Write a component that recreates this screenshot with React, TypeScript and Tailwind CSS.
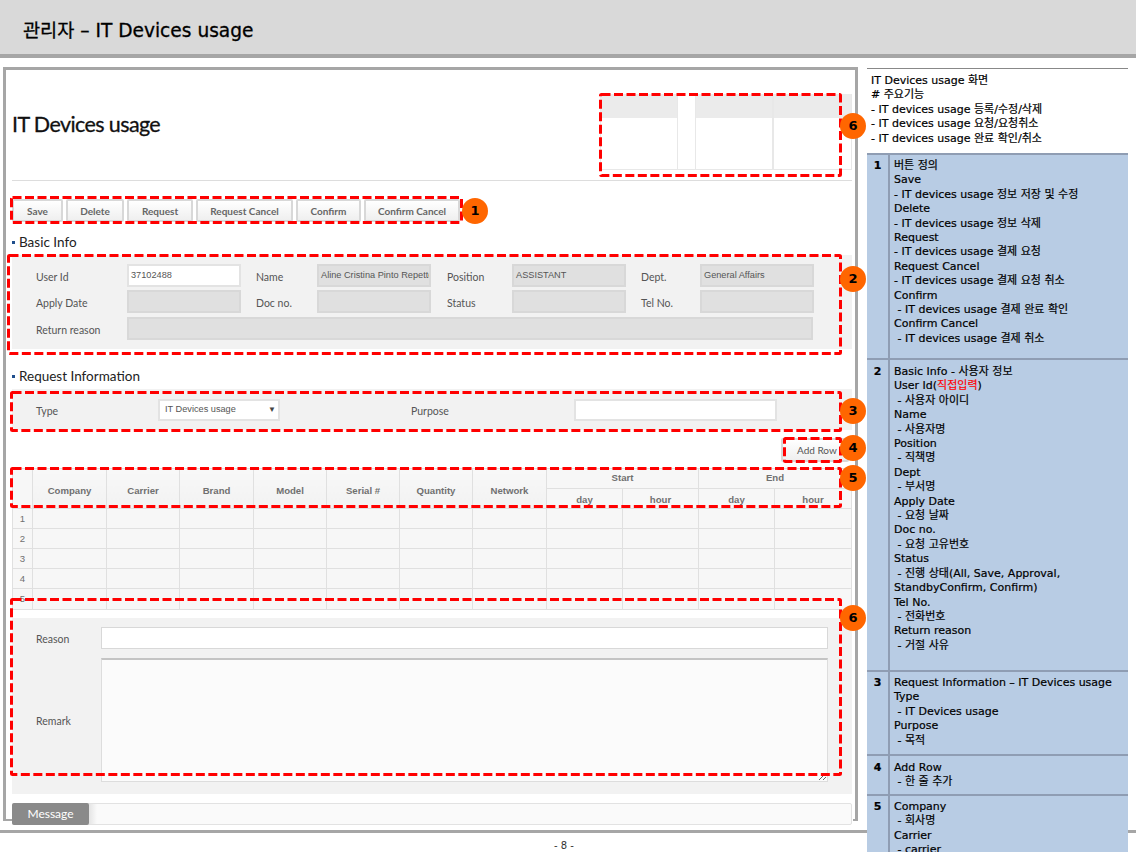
import React from "react";

const LABEL = "pt-[4px] text-[10.5px] text-[#555] font-['Lato',sans-serif]";
const ARIAL = "font-['Liberation_Sans',sans-serif]";
const PANEL_FONT = "font-['DejaVu_Sans','Noto_Sans_CJK_KR',sans-serif]";
const CELL = "border border-[#e0e0e0]";

const buttons = ["Save", "Delete", "Request", "Request Cancel", "Confirm", "Confirm Cancel"];
const buttonWidths = ["w-[51px]", "w-[58px]", "w-[66px]", "w-[97px]", "w-[65px]", "w-[96px]"];
const columns = ["Company", "Carrier", "Brand", "Model", "Serial #", "Quantity", "Network"];
const colWidths = [20, 74, 73, 74, 73, 73, 73, 74, 76, 76, 76, 77];

// annotation boxes and number badges drawn over the screenshot
const boxes = [
  { x: 10, y: 196, w: 453, h: 28 },
  { x: 599, y: 93, w: 243, h: 84 },
  { x: 7, y: 254, w: 835, h: 101 },
  { x: 10, y: 391, w: 832, h: 41 },
  { x: 783, y: 437, w: 59, h: 26 },
  { x: 10, y: 467, w: 832, h: 41 },
  { x: 10, y: 598, w: 832, h: 178 },
];
const badges = [
  { n: 1, x: 475, y: 211 },
  { n: 6, x: 853, y: 126 },
  { n: 2, x: 853, y: 279 },
  { n: 3, x: 853, y: 411 },
  { n: 4, x: 853, y: 448 },
  { n: 5, x: 853, y: 478 },
  { n: 6, x: 853, y: 618 },
];

function Field({ value, white, className }: { value?: string; white?: boolean; className: string }) {
  return (
    <div
      className={`h-[23px] border-2 px-[2px] text-[9.2px] leading-[19px] overflow-hidden whitespace-nowrap text-[#555] ${ARIAL} ${
        white ? "bg-white border-[#e3e3e3]" : "bg-[#e0e0e0] border-[#d8d8d8]"
      } ${className}`}
    >
      {value}
    </div>
  );
}

function SectionTitle({ title, className }: { title: string; className: string }) {
  return (
    <div className={`flex items-center gap-[4px] ${className}`}>
      <span className="w-[3px] h-[3px] bg-[#1f4e8c]" />
      <span className="text-[13.5px] leading-[18px] text-[#222] font-['Lato',sans-serif]">{title}</span>
    </div>
  );
}

function Row({ n, h, top, children }: { n: number; h: string; top?: string; children: React.ReactNode }) {
  return (
    <div className={`flex border-b-2 border-[#8f9db3] ${h}`}>
      <div className={`w-[23px] shrink-0 border-r-2 border-[#8f9db3] text-center font-bold ${top ?? "pt-[4px]"}`}>{n}</div>
      <div className={`pl-[4px] whitespace-pre-wrap ${top ?? "pt-[4px]"}`}>{children}</div>
    </div>
  );
}

export default function App() {
  return (
    <div className="relative w-[1136px] h-[852px] overflow-hidden bg-white flex flex-col">
      <div className="h-[58px] shrink-0 bg-[#d9d9d9] border-b-4 border-[#a6a6a6] pl-[23px] pt-[18px]">
        <h1 className={`text-[18.6px] leading-[26px] text-black [-webkit-text-stroke:0.3px_#000] ${PANEL_FONT}`}>
          관리자 – IT Devices usage
        </h1>
      </div>

      <div className="h-[772px] shrink-0 flex items-start">
        <div className="relative ml-[3px] mt-[9px] w-[855px] h-[754px] shrink-0 border-[3px] border-b-0 border-[#a6a6a6] pl-[6px] pr-[3px] flex flex-col">
          <div className="absolute -left-[3px] bottom-0 w-[9px] h-[2px] bg-[#a6a6a6]" />
          <div className="absolute -right-[3px] bottom-0 w-[5px] h-[2px] bg-[#a6a6a6]" />

          {/* page title */}
          <div className="h-[111px] shrink-0 border-b border-[#ddd] flex justify-between">
            <div className="pt-[39px] text-[21.5px] leading-[30px] tracking-[-0.6px] [-webkit-text-stroke:0.3px_#111] text-[#111] font-['Lato',sans-serif]">
              IT Devices usage
            </div>
            <div className="flex mt-[24px] h-[76px] border-b border-[#e8e8e8]">
              {[78, 0, 78, 79].map((w, i) =>
                w === 0 ? (
                  <div key={i} className="w-[17px]" />
                ) : (
                  <div key={i} className="border-r border-l border-[#e8e8e8]" style={{ width: w }}>
                    <div className="h-[24px] bg-[#ebebeb]" />
                  </div>
                ),
              )}
            </div>
          </div>

          {/* action buttons */}
          <div className="flex gap-[3px] mt-[18px] h-[23px] shrink-0">
            {buttons.map((b, i) => (
              <button
                key={b}
                className={`${buttonWidths[i]} h-[23px] pt-[2px] border-2 border-[#d8d8d8] rounded-[2px] bg-gradient-to-b from-white to-[#efefef] text-[10px] font-bold text-[#666] font-['Lato',sans-serif]`}
              >
                {b}
              </button>
            ))}
          </div>

          <SectionTitle title="Basic Info" className="mt-[11px]" />

          <div className="mt-[4px] h-[94px] shrink-0 bg-[#f2f2f2] pt-[9px] pl-[24px] flex flex-col gap-[3px]">
            <div className="flex items-center">
              <span className={`w-[91px] ${LABEL}`}>User Id</span>
              <Field white value="37102488" className="w-[114px]" />
              <span className={`w-[76px] pl-[15px] ${LABEL}`}>Name</span>
              <Field value="Aline Cristina Pinto Repetto" className="w-[114px]" />
              <span className={`w-[81px] pl-[16px] ${LABEL}`}>Position</span>
              <Field value="ASSISTANT" className="w-[114px]" />
              <span className={`w-[74px] pl-[15px] ${LABEL}`}>Dept.</span>
              <Field value="General Affairs" className="w-[114px]" />
            </div>
            <div className="flex items-center">
              <span className={`w-[91px] ${LABEL}`}>Apply Date</span>
              <Field className="w-[114px]" />
              <span className={`w-[76px] pl-[15px] ${LABEL}`}>Doc no.</span>
              <Field className="w-[114px]" />
              <span className={`w-[81px] pl-[16px] ${LABEL}`}>Status</span>
              <Field className="w-[114px]" />
              <span className={`w-[74px] pl-[15px] ${LABEL}`}>Tel No.</span>
              <Field className="w-[114px]" />
            </div>
            <div className="flex items-center mt-[1px]">
              <span className={`w-[91px] ${LABEL}`}>Return reason</span>
              <Field className="w-[686px]" />
            </div>
          </div>

          <SectionTitle title="Request Information" className="mt-[18px]" />

          <div className="mt-[4px] h-[41px] shrink-0 bg-[#f2f2f2] pl-[24px] flex items-center">
            <span className={`w-[122px] ${LABEL}`}>Type</span>
            <div className={`w-[122px] h-[22px] border-2 border-[#e3e3e3] bg-white flex items-center justify-between pl-[5px] pr-[2px] text-[9.2px] text-[#555] ${ARIAL}`}>
              <span>IT Devices usage</span>
              <span className="text-[8px] text-[#444]">▼</span>
            </div>
            <span className={`w-[163px] pl-[131px] whitespace-nowrap ${LABEL}`}>Purpose</span>
            <div className="ml-[131px] w-[203px] h-[22px] border-2 border-[#e3e3e3] bg-white" />
          </div>

          <div className="mt-[8px] h-[24px] shrink-0 flex justify-end pr-[3px]">
            <button className="w-[68px] h-[24px] pt-[1px] border-2 border-[#d8d8d8] rounded-[2px] bg-gradient-to-b from-white to-[#efefef] pl-[14px] text-left text-[10px] text-[#555] font-['Lato',sans-serif]">
              Add Row
            </button>
          </div>

          {/* grid */}
          <table className={`mt-[6px] w-[839px] table-fixed border-collapse bg-[#f7f7f7] text-[9.6px] text-[#707070] ${ARIAL}`}>
            <colgroup>
              {colWidths.map((w, i) => (
                <col key={i} style={{ width: w }} />
              ))}
            </colgroup>
            <thead className="font-bold">
              <tr className="h-[20px]">
                <th rowSpan={2} className={CELL} />
                {columns.map((c) => (
                  <th key={c} rowSpan={2} className={`${CELL} pt-[6px] bg-gradient-to-b from-[#f8f8f8] to-[#f2f2f2]`}>
                    {c}
                  </th>
                ))}
                <th colSpan={2} className={CELL}>Start</th>
                <th colSpan={2} className={CELL}>End</th>
              </tr>
              <tr className="h-[20px]">
                <th className={`${CELL} pt-[3px]`}>day</th>
                <th className={`${CELL} pt-[3px]`}>hour</th>
                <th className={`${CELL} pt-[3px]`}>day</th>
                <th className={`${CELL} pt-[3px]`}>hour</th>
              </tr>
            </thead>
            <tbody>
              {[1, 2, 3, 4, 5].map((n) => (
                <tr key={n} className={n === 5 ? "h-[21px]" : "h-[20px]"}>
                  <td className={`${CELL} pt-px text-center`}>{n}</td>
                  {colWidths.slice(1).map((_, i) => (
                    <td key={i} className={CELL} />
                  ))}
                </tr>
              ))}
            </tbody>
          </table>

          {/* reason + remark */}
          <div className="mt-[8px] h-[176px] shrink-0 bg-[#f2f2f2] pl-[24px] pt-[9px] flex flex-col gap-[9px]">
            <div className="flex items-center">
              <span className={`w-[65px] ${LABEL}`}>Reason</span>
              <div className="w-[727px] h-[22px] border border-[#d8d8d8] bg-white" />
            </div>
            <div className="flex items-center">
              <span className={`w-[65px] ${LABEL}`}>Remark</span>
              <textarea className="block w-[727px] h-[124px] border border-[#ddd] border-t-2 border-t-[#c4c4c4] bg-[#fbfbfb]" />
            </div>
          </div>

          <div className="mt-[9px] h-[22px] shrink-0 flex border border-[#e2e2e2] bg-[#fafafa] rounded-[2px]">
            <div className="w-[77px] -my-px -ml-px bg-[#8a8a8a] rounded-[2px] text-[12px] leading-[22px] text-center text-white font-['Lato',sans-serif]">
              Message
            </div>
            <div className="w-[8px] bg-gradient-to-r from-[#e4e4e4] to-[#fafafa]" />
          </div>
        </div>

        {/* description panel */}
        <div className={`relative z-10 ml-[9px] mt-[10px] w-[261px] shrink-0 border-t border-[#888] bg-white text-[11px] leading-[14.4px] text-black [-webkit-text-stroke:0.2px_#000] ${PANEL_FONT}`}>
          <div className="h-[84px] pl-[4px] pt-[5px] whitespace-pre-wrap">
            {"IT Devices usage 화면\n# 주요기능\n- IT devices usage 등록/수정/삭제\n- IT devices usage 요청/요청취소\n- IT devices usage 완료 확인/취소"}
          </div>
          <div className="bg-[#b8cce4] border-t-2 border-[#8f9db3]">
            <Row n={1} h="h-[205px]">
              {"버튼 정의\nSave\n- IT devices usage 정보 저장 및 수정\nDelete\n- IT devices usage 정보 삭제\nRequest\n- IT devices usage 결제 요청\nRequest Cancel\n- IT devices usage 결제 요청 취소\nConfirm\n - IT devices usage 결제 완료 확인\nConfirm Cancel\n - IT devices usage 결제 취소"}
            </Row>
            <Row n={2} h="h-[312px]" top="pt-[5px]">
              {"Basic Info - 사용자 정보\nUser Id("}
              <span className="text-[#ff0000] [-webkit-text-stroke:0.2px_#ff0000]">직접입력</span>
              {")\n - 사용자 아이디\nName\n - 사용자명\nPosition\n - 직책명\nDept\n - 부서명\nApply Date\n - 요청 날짜\nDoc no.\n - 요청 고유번호\nStatus\n - 진행 상태(All, Save, Approval,\nStandbyConfirm, Confirm)\nTel No.\n - 전화번호\nReturn reason\n - 거절 사유"}
            </Row>
            <Row n={3} h="h-[84px]">
              {"Request Information – IT Devices usage\nType\n - IT Devices usage\nPurpose\n - 목적"}
            </Row>
            <Row n={4} h="h-[40px]" top="pt-[5px]">
              {"Add Row\n - 한 줄 추가"}
            </Row>
            <Row n={5} h="h-[200px]">
              {"Company\n - 회사명\nCarrier\n - carrier\nBrand\n - 브랜드"}
            </Row>
          </div>
        </div>
      </div>

      <div className={`h-[22px] shrink-0 border-t-[3px] border-[#a6a6a6] text-center text-[10px] leading-[25px] text-[#333] pr-[8px] ${PANEL_FONT}`}>
        - 8 -
      </div>

      {boxes.map((b, i) => (
        <svg key={i} className="absolute z-20" style={{ left: b.x, top: b.y, width: b.w, height: b.h }}>
          <rect
            x={1.5}
            y={1.5}
            width={b.w - 3}
            height={b.h - 3}
            rx={1}
            fill="none"
            stroke="#ff0000"
            strokeWidth={3}
            strokeDasharray="9 3.5"
          />
        </svg>
      ))}
      {badges.map((b, i) => (
        <div
          key={i}
          className="absolute z-20 w-[26px] h-[26px] -ml-[13px] -mt-[13px] rounded-full bg-[#ff6600] text-center text-[13px] leading-[26px] font-bold text-black font-['DejaVu_Sans',sans-serif]"
          style={{ left: b.x, top: b.y }}
        >
          {b.n}
        </div>
      ))}
    </div>
  );
}
